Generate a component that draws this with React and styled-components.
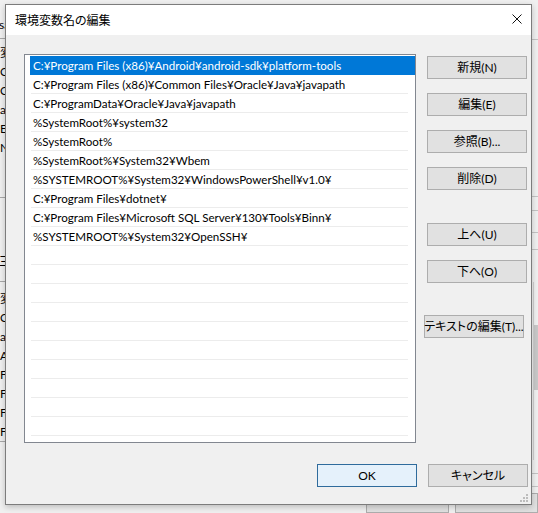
import React from "react";
import styled, { createGlobalStyle } from "styled-components";

const UI_FONT = `"Lato", "Noto Sans CJK JP", sans-serif`;

const Global = createGlobalStyle`
  html, body { margin: 0; padding: 0; background: #f0f0f0; }
  body {
    width: 538px; height: 513px; overflow: hidden;
    font-family: ${UI_FONT};
    font-feature-settings: "palt";
    color: #000;
  }
  * { box-sizing: border-box; }
`;

/* ---------- desktop & window behind ---------- */
const Desktop = styled.div`
  position: relative;
  width: 538px;
  height: 513px;
  overflow: hidden;
  background: #f0f0f0;
`;

const BehindWindow = styled.div`
  display: flex;
  flex-direction: column;
  height: 100%;
  font-size: 12px;
`;

const BehindTop = styled.div`
  display: flex;
  height: 505px;
`;

const BehindLeft = styled.div`
  width: 60px;
  margin-left: -1px;
  padding-top: 15px;
  display: flex;
  flex-direction: column;
`;

const BehindHeader = styled.div`
  height: ${(p) => p.$h}px;
  line-height: 20px;
  border-bottom: 1px solid #a8a8a8;
  white-space: nowrap;
`;

const BehindList = styled.div`
  height: ${(p) => p.$h}px;
  padding-top: ${(p) => p.$pt}px;
  border-bottom: 1px solid #a8a8a8;
  border-left: 1px solid #c8c8c8;
`;

const BehindRow = styled.div`
  height: 19px;
  line-height: 19px;
  white-space: nowrap;
`;

const BehindGap = styled.div`
  height: ${(p) => p.$h}px;
`;

const BehindFill = styled.div`
  flex: 1;
`;

const BehindRight = styled.div`
  width: 8px;
  display: flex;
  flex-direction: column;
`;

const RightSeg = styled.div`
  height: ${(p) => p.$h}px;
  border-bottom: ${(p) => (p.$line ? "1px solid #c4c4c4" : "none")};
`;

const RightTrack = styled.div`
  height: 178px;
  margin-left: 3px;
  border-left: 1px solid #d0d0d0;
  padding-top: 43px;
`;

const RightThumb = styled.div`
  height: 65px;
  background: #c8c8c8;
`;

const BehindBottom = styled.div`
  display: flex;
  gap: 6px;
  padding-left: 366px;
  padding-top: 5px;
`;

const BehindButton = styled.div`
  width: ${(p) => p.$w}px;
  height: 20px;
  border: 1px solid #adadad;
  background: #e1e1e1;
`;

/* ---------- dialog ---------- */
const Dialog = styled.div`
  position: absolute;
  left: 5px;
  top: 4px;
  width: 527px;
  height: 501px;
  border: 1px solid #7c7c7c;
  background: #f0f0f0;
  display: flex;
  flex-direction: column;
  box-shadow: 0 2px 6px rgba(0, 0, 0, 0.22);
  font-size: 12px;
`;

const TitleBar = styled.div`
  height: 30px;
  background: #fff;
  display: flex;
  align-items: center;
  padding-left: 9px;
`;

const Title = styled.div`
  font-size: 12px;
  line-height: 16px;
  margin-top: 2px;
  flex: 1;
`;

const CloseButton = styled.div`
  align-self: flex-start;
  width: 28px;
  height: 27px;
  display: flex;
  align-items: center;
  justify-content: center;
`;

const Body = styled.div`
  flex: 1;
  display: flex;
  flex-direction: column;
  padding: 19px 3px 0 18px;
`;

const MainRow = styled.div`
  display: flex;
  align-items: flex-start;
`;

const ListBox = styled.div`
  width: 392px;
  height: 389px;
  border: 1px solid #828790;
  background: #fff;
  padding-top: 1px;
  display: flex;
  flex-direction: column;
`;

const Row = styled.div`
  height: 19px;
  margin-left: 5px;
  padding: 1px 0 0 3px;
  line-height: 18px;
  font-size: 11.6px;
  white-space: nowrap;
  overflow: hidden;
  color: ${(p) => (p.$selected ? "#fff" : "#000")};
  background: ${(p) =>
    p.$selected
      ? "#0078d7"
      : "linear-gradient(#ececec, #ececec) no-repeat 1px 100% / calc(100% - 8px) 1px"};
`;

const ButtonColumn = styled.div`
  display: flex;
  flex-direction: column;
  gap: 14px;
  margin-left: 11px;
  padding-top: 2px;
`;

const Button = styled.div`
  width: ${(p) => p.$w || 100}px;
  height: 23px;
  margin-top: ${(p) => p.$mt || 0}px;
  margin-left: ${(p) => p.$ml || 0}px;
  border: 1px solid ${(p) => (p.$default ? "#2f6b9c" : "#adadad")};
  background: ${(p) => (p.$default ? "#e5f1fb" : "#e1e1e1")};
  display: flex;
  align-items: center;
  justify-content: center;
  font-size: 12px;
  line-height: 16px;
  padding-top: 1px;
  white-space: nowrap;
`;

const Footer = styled.div`
  display: flex;
  justify-content: flex-end;
  gap: 11px;
  margin-top: 21px;
`;

const GripRow = styled.div`
  flex: 1;
  display: flex;
  justify-content: flex-end;
  align-items: flex-end;
  padding-bottom: 2px;
`;

const paths = [
  "C:¥Program Files (x86)¥Android¥android-sdk¥platform-tools",
  "C:¥Program Files (x86)¥Common Files¥Oracle¥Java¥javapath",
  "C:¥ProgramData¥Oracle¥Java¥javapath",
  "%SystemRoot%¥system32",
  "%SystemRoot%",
  "%SystemRoot%¥System32¥Wbem",
  "%SYSTEMROOT%¥System32¥WindowsPowerShell¥v1.0¥",
  "C:¥Program Files¥dotnet¥",
  "C:¥Program Files¥Microsoft SQL Server¥130¥Tools¥Binn¥",
  "%SYSTEMROOT%¥System32¥OpenSSH¥",
];

const rows = Array.from({ length: 20 }, (_, i) => paths[i] || "");

const CloseIcon = () => (
  <svg width="10" height="10" viewBox="0 0 10 10">
    <path d="M0.5 0.5 L9.5 9.5 M9.5 0.5 L0.5 9.5" stroke="#111" strokeWidth="1" fill="none" />
  </svg>
);

const Grip = () => (
  <svg width="8" height="8" viewBox="0 0 8 8">
    {[
      [6, 0],
      [3, 3],
      [6, 3],
      [0, 6],
      [3, 6],
      [6, 6],
    ].map(([x, y]) => (
      <rect key={`${x}-${y}`} x={x} y={y} width="2" height="2" fill="#bcbcbc" />
    ))}
  </svg>
);

export default function App() {
  return (
    <Desktop>
      <Global />
      <BehindWindow>
        <BehindTop>
          <BehindLeft>
            <BehindHeader $h={24}>sa</BehindHeader>
            <BehindList $h={159} $pt={4}>
              {["変", "Or", "Or", "a", "E", "N"].map((t, i) => (
                <BehindRow key={i}>{t}</BehindRow>
              ))}
            </BehindList>
            <BehindGap $h={54} />
            <BehindHeader $h={30}>三</BehindHeader>
            <BehindList $h={160} $pt={7}>
              {["変", "OS", "a", "A", "F", "F", "F", "F"].map((t, i) => (
                <BehindRow key={i}>{t}</BehindRow>
              ))}
            </BehindList>
          </BehindLeft>
          <BehindFill />
          <BehindRight>
            <RightSeg $h={40} $line />
            <RightSeg $h={157} $line />
            <RightSeg $h={14} $line />
            <RightSeg $h={22} $line />
            <RightSeg $h={17} $line />
            <RightSeg $h={32} />
            <RightTrack>
              <RightThumb />
            </RightTrack>
            <RightSeg $h={14} $line />
            <RightSeg $h={13} $line />
          </BehindRight>
        </BehindTop>
        <BehindBottom>
          <BehindButton $w={89} />
          <BehindButton $w={90} />
        </BehindBottom>
      </BehindWindow>

      <Dialog>
        <TitleBar>
          <Title>環境変数名の編集</Title>
          <CloseButton>
            <CloseIcon />
          </CloseButton>
        </TitleBar>
        <Body>
          <MainRow>
            <ListBox>
              {rows.map((t, i) => (
                <Row key={i} $selected={i === 0}>
                  {t}
                </Row>
              ))}
            </ListBox>
            <ButtonColumn>
              <Button>新規(N)</Button>
              <Button>編集(E)</Button>
              <Button>参照(B)...</Button>
              <Button>削除(D)</Button>
              <Button $mt={19}>上へ(U)</Button>
              <Button>下へ(O)</Button>
              <Button $mt={18} $ml={-3}>
                テキストの編集(T)...
              </Button>
            </ButtonColumn>
          </MainRow>
          <Footer>
            <Button $default>OK</Button>
            <Button>キャンセル</Button>
          </Footer>
          <GripRow>
            <Grip />
          </GripRow>
        </Body>
      </Dialog>
    </Desktop>
  );
}
